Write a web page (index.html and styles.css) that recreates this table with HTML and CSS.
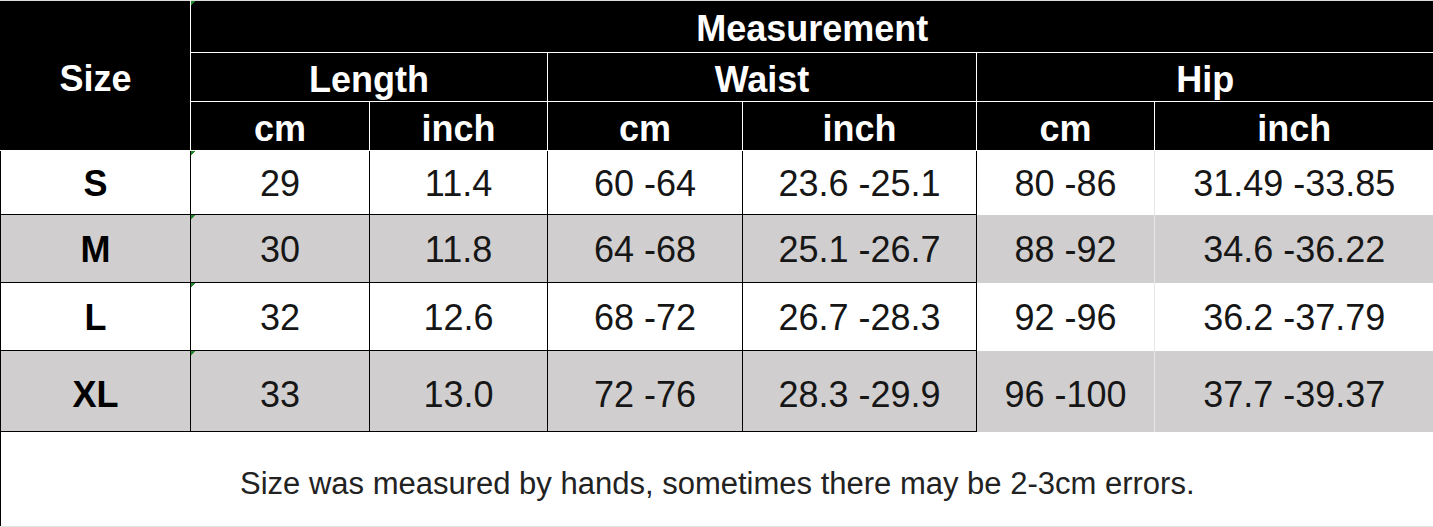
FILE: index.html
```html
<!DOCTYPE html>
<html lang="en">
<head>
  <meta charset="UTF-8" />
  <meta name="viewport" content="width=device-width, initial-scale=1.0" />
  <title>Size Chart</title>
  <link rel="stylesheet" href="styles.css">
</head>
<body>
  <table class="size-chart">
    <colgroup>
      <col class="c-size">
      <col class="c-len-cm">
      <col class="c-len-in">
      <col class="c-waist-cm">
      <col class="c-waist-in">
      <col class="c-hip-cm">
      <col class="c-hip-in">
    </colgroup>
    <thead>
      <tr class="h1">
        <th rowspan="3" class="size-head">Size</th>
        <th colspan="6" class="mark">Measurement</th>
      </tr>
      <tr class="h2">
        <th colspan="2">Length</th>
        <th colspan="2">Waist</th>
        <th colspan="2">Hip</th>
      </tr>
      <tr class="h3">
        <th>cm</th>
        <th>inch</th>
        <th>cm</th>
        <th>inch</th>
        <th>cm</th>
        <th>inch</th>
      </tr>
    </thead>
    <tbody>
      <tr class="r-s">
        <td class="size">S</td>
        <td class="mark">29</td>
        <td>11.4</td>
        <td>60 -64</td>
        <td>23.6 -25.1</td>
        <td class="hip">80 -86</td>
        <td class="hip last">31.49 -33.85</td>
      </tr>
      <tr class="r-m grey">
        <td class="size">M</td>
        <td class="mark">30</td>
        <td>11.8</td>
        <td>64 -68</td>
        <td>25.1 -26.7</td>
        <td class="hip">88 -92</td>
        <td class="hip last">34.6 -36.22</td>
      </tr>
      <tr class="r-l">
        <td class="size">L</td>
        <td class="mark">32</td>
        <td>12.6</td>
        <td>68 -72</td>
        <td>26.7 -28.3</td>
        <td class="hip">92 -96</td>
        <td class="hip last">36.2 -37.79</td>
      </tr>
      <tr class="r-xl grey">
        <td class="size">XL</td>
        <td class="mark">33</td>
        <td>13.0</td>
        <td>72 -76</td>
        <td>28.3 -29.9</td>
        <td class="hip">96 -100</td>
        <td class="hip last">37.7 -39.37</td>
      </tr>
    </tbody>
    <tfoot>
      <tr>
        <td colspan="7" class="note">Size was measured by hands, sometimes there may be 2-3cm errors.</td>
      </tr>
    </tfoot>
  </table>
</body>
</html>
```

FILE: styles.css
```css
body {
  margin: 0;
  background: #fff;
  font-family: "Liberation Sans", Arial, sans-serif;
}
.size-chart {
  width: 1433px;
  border-collapse: collapse;
  table-layout: fixed;
}
.size-chart th, .size-chart td {
  box-sizing: border-box;
  line-height: 1;
}
.c-size { width: 190px; }
.c-len-cm { width: 179px; }
.c-len-in { width: 178px; }
.c-waist-cm { width: 195px; }
.c-waist-in { width: 234px; }
.c-hip-cm { width: 178px; }
.c-hip-in { width: 279px; }

thead th {
  background: #000;
  color: #fff;
  font-size: 36px;
  font-weight: bold;
  padding: 5px 0 0;
  border: 1px solid #fff;
  text-align: center;
  vertical-align: middle;
}
thead th.size-head {
  padding-top: 6px;
  border-left: 1px solid #000;
  border-top-color: #ddd;
}
.h1 th { height: 52px; border-top-color: #ddd; }
.h2 th { height: 49px; }
.h3 th { height: 49px; }
.h1 th:last-child, .h2 th:last-child, .h3 th:last-child { border-right: none; }

tbody td {
  font-size: 36px;
  color: #161616;
  text-align: center;
  padding: 3px 0 0;
  border: 1px solid #000;
}
tbody td.size {
  font-weight: bold;
  color: #000;
}
.r-s td { height: 64px; }
.r-m td { height: 68px; }
.r-l td { height: 68px; }
.r-xl td { height: 81px; padding-top: 8px; }
tbody tr.grey td { background-color: #d0cece; }
tbody td.hip {
  border-top: none;
  border-bottom: none;
  border-right: 1px solid #e6e6e6;
}
tbody td.hip.last { border-right: none; }

.mark {
  background-image: linear-gradient(135deg, #1f8a2a 0 3px, transparent 3px);
  background-repeat: no-repeat;
  background-size: 6px 6px;
}

.note {
  height: 95px;
  border-left: 1px solid #000;
  border-bottom: 1px solid #e3e3e3;
  text-align: center;
  font-size: 31px;
  color: #222;
  padding: 8px 0 0;
}
```
